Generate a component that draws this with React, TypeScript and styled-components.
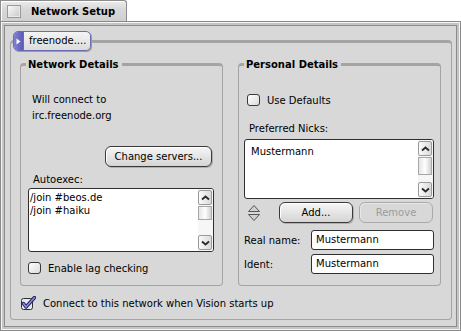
import styled, { createGlobalStyle } from "styled-components"

const GlobalStyle = createGlobalStyle`
  html, body {
    margin: 0;
    padding: 0;
    background: #ffffff;
  }
  body {
    font-family: "DejaVu Sans", "Liberation Sans", sans-serif;
    font-size: 10px;
    color: #000;
  }
`

const Screen = styled.div`
  width: 461px;
  height: 331px;
  display: flex;
  flex-direction: column;
`

const Tab = styled.div`
  box-sizing: border-box;
  width: 127px;
  height: 21px;
  display: flex;
  align-items: center;
  gap: 10px;
  padding-left: 6px;
  border: 1px solid #8c8c8c;
  border-bottom: none;
  border-top-right-radius: 3px;
  background: linear-gradient(#ececec, #d8d8d8 40%, #d0d0d0);
  box-shadow: inset 1px 1px 0 #ffffff;
`

const CloseBox = styled.div`
  box-sizing: border-box;
  width: 14px;
  height: 13px;
  border: 1px solid #9a9a9a;
  background: linear-gradient(135deg, #fafafa, #c8c8c8);
  box-shadow: inset -1px -1px 0 #e8e8e8;
`

const TabTitle = styled.span`
  font-weight: bold;
  font-size: 10px;
`

const Window = styled.div`
  box-sizing: border-box;
  width: 461px;
  height: 310px;
  padding: 18px 8px 6px 9px;
  background: #d8d8d8;
  border: 1px solid #8a8a8a;
  box-shadow: inset 0 0 0 1px #f4f4f4, inset 0 0 0 3px #c4c4c4,
    inset 0 0 0 4px #8c8c8c;
`

const Box = styled.div<{ $w?: number; $h?: number }>`
  position: relative;
  box-sizing: border-box;
  width: ${({ $w }) => ($w ? `${$w}px` : "auto")};
  height: ${({ $h }) => ($h ? `${$h}px` : "auto")};
  border: 1px solid #a4a4a4;
  border-top: 3px solid #a4a4a4;
  border-radius: 4px;
`

const OuterBox = styled(Box)`
  padding: 20px 0 0 9px;
`

const BoxTitle = styled.div`
  position: absolute;
  top: -8px;
  left: 5px;
  padding: 0 3px 0 2px;
  background: #d8d8d8;
  font-weight: bold;
  line-height: 13px;
`

const MenuField = styled.div`
  position: absolute;
  top: -12px;
  left: 2px;
  box-sizing: border-box;
  width: 78px;
  height: 20px;
  display: flex;
  align-items: stretch;
  border: 1px solid #6c6cb0;
  border-radius: 5px;
  overflow: hidden;
  background: linear-gradient(#f4f4f4, #dcdcdc);
  box-shadow: 1px 1px 0 #9a9a9a;
`

const MenuMark = styled.div`
  width: 9px;
  display: flex;
  align-items: center;
  justify-content: center;
  background: linear-gradient(90deg, #8080d8, #5c5cb8);
  border-right: 1px solid #6c6cb0;
`

const MenuLabel = styled.span`
  padding-left: 5px;
  line-height: 18px;
`

const Columns = styled.div`
  display: grid;
  grid-template-columns: 203px 203px;
  column-gap: 15px;
`

const Content = styled.div`
  display: flex;
  flex-direction: column;
  align-items: flex-start;
`

const Text = styled.div<{ $mt?: number; $ml?: number }>`
  margin-top: ${({ $mt }) => $mt ?? 0}px;
  margin-left: ${({ $ml }) => $ml ?? 0}px;
  line-height: 14px;
  white-space: nowrap;
`

const Button = styled.div<{ $w: number; $disabled?: boolean }>`
  box-sizing: border-box;
  width: ${({ $w }) => $w}px;
  height: 21px;
  display: flex;
  align-items: center;
  justify-content: center;
  border: 1px solid ${({ $disabled }) => ($disabled ? "#aaaaaa" : "#3a3a3a")};
  border-radius: 6px;
  color: ${({ $disabled }) => ($disabled ? "#9c9c9c" : "#000")};
  background: ${({ $disabled }) =>
    $disabled ? "#d8d8d8" : "linear-gradient(#f6f6f6, #e2e2e2 60%, #d4d4d4)"};
  box-shadow: ${({ $disabled }) =>
    $disabled ? "inset 1px 1px 0 #e8e8e8" : "inset 1px 1px 0 #ffffff, 1px 1px 0 #b0b0b0"};
`

const ListView = styled.div<{ $mt: number; $ml: number; $w: number; $h: number }>`
  box-sizing: border-box;
  margin-top: ${({ $mt }) => $mt}px;
  margin-left: ${({ $ml }) => $ml}px;
  width: ${({ $w }) => $w}px;
  height: ${({ $h }) => $h}px;
  display: flex;
  border: 1px solid #2e2e2e;
  border-radius: 3px;
  background: #ffffff;
  overflow: hidden;
`

const ListItems = styled.div<{ $pl: number }>`
  flex: 1;
  padding: 2px 0 0 ${({ $pl }) => $pl}px;
  line-height: 13px;
`

const ScrollBar = styled.div`
  width: 14px;
  display: flex;
  flex-direction: column;
  padding: 1px 1px 1px 0;
  background: #f6f6f6;
`

const ScrollArrow = styled.div`
  box-sizing: border-box;
  height: 15px;
  display: flex;
  align-items: center;
  justify-content: center;
  border: 1px solid #9a9a9a;
  border-radius: 2px;
  background: linear-gradient(90deg, #fafafa, #dadada);
`

const Thumb = styled.div<{ $h: number }>`
  box-sizing: border-box;
  height: ${({ $h }) => $h}px;
  margin-top: 1px;
  border: 1px solid #a8a8a8;
  background: linear-gradient(90deg, #e4e4e4, #ffffff 50%, #d2d2d2);
`

const Track = styled.div`
  flex: 1;
`

const CheckRow = styled.div<{ $mt: number; $ml: number }>`
  display: flex;
  align-items: center;
  gap: 7px;
  margin-top: ${({ $mt }) => $mt}px;
  margin-left: ${({ $ml }) => $ml}px;
  white-space: nowrap;
`

const CheckBox = styled.div`
  box-sizing: border-box;
  width: 13px;
  height: 12px;
  border: 1px solid #3a3a3a;
  border-radius: 3px;
  background: linear-gradient(135deg, #ffffff, #dcdcdc);
`

const ButtonRow = styled.div<{ $mt: number }>`
  display: flex;
  align-items: center;
  margin-top: ${({ $mt }) => $mt}px;
  margin-left: 8px;
`

const Spacer = styled.div<{ $w: number }>`
  width: ${({ $w }) => $w}px;
  flex: none;
`

const Field = styled.div`
  box-sizing: border-box;
  width: 123px;
  height: 20px;
  padding-left: 4px;
  line-height: 17px;
  border: 1px solid #2e2e2e;
  border-radius: 3px;
  background: #ffffff;
`

const FieldRow = styled.div<{ $mt: number }>`
  display: flex;
  align-items: center;
  margin-top: ${({ $mt }) => $mt}px;
  margin-left: 5px;
`

const FieldLabel = styled.span`
  width: 67px;
`

const Chevron = ({ down }: { down?: boolean }) => (
  <svg width="9" height="6" viewBox="0 0 9 6">
    <path
      d={down ? "M1 1.5 L4.5 4.5 L8 1.5" : "M1 4.5 L4.5 1.5 L8 4.5"}
      fill="none"
      stroke="#2a2a2a"
      strokeWidth="1.8"
    />
  </svg>
)

const Scroller = ({ thumb }: { thumb: number }) => (
  <ScrollBar>
    <ScrollArrow>
      <Chevron />
    </ScrollArrow>
    <Thumb $h={thumb} />
    <Track />
    <ScrollArrow>
      <Chevron down />
    </ScrollArrow>
  </ScrollBar>
)

const Checked = () => (
  <svg width="15" height="14" viewBox="0 0 15 14">
    <rect x="0.5" y="2.5" width="11" height="11" rx="2" fill="#e8e8f4" stroke="#2e2e2e" />
    <path
      d="M2.5 7.5 L5 11 L13.5 1.5"
      fill="none"
      stroke="#202050"
      strokeWidth="3.4"
      strokeLinejoin="round"
      strokeLinecap="round"
    />
    <path
      d="M2.5 7.5 L5 11 L13.5 1.5"
      fill="none"
      stroke="#8a8ae0"
      strokeWidth="1.6"
      strokeLinejoin="round"
      strokeLinecap="round"
    />
  </svg>
)

const Arrows = () => (
  <svg width="14" height="20" viewBox="0 0 14 20">
    <path d="M1.5 8.5 L7 2.5 L12.5 8.5 Z" fill="#d0d0d0" stroke="#555" />
    <path d="M1.5 11.5 L7 17.5 L12.5 11.5 Z" fill="#d0d0d0" stroke="#555" />
  </svg>
)

export default function App() {
  return (
    <Screen>
      <GlobalStyle />
      <Tab>
        <CloseBox />
        <TabTitle>Network Setup</TabTitle>
      </Tab>
      <Window>
        <OuterBox $w={442} $h={280}>
          <MenuField>
            <MenuMark>
              <svg width="5" height="7" viewBox="0 0 5 7">
                <path d="M0.5 0.5 L4.5 3.5 L0.5 6.5 Z" fill="#ffffff" />
              </svg>
            </MenuMark>
            <MenuLabel>freenode....</MenuLabel>
          </MenuField>
          <Columns>
            <Box $h={223}>
              <BoxTitle>Network Details</BoxTitle>
              <Content>
                <Text $mt={27} $ml={11}>Will connect to</Text>
                <Text $mt={2} $ml={11}>irc.freenode.org</Text>
                <ButtonRow $mt={23}>
                  <Spacer $w={76} />
                  <Button $w={107}>Change servers...</Button>
                </ButtonRow>
                <Text $mt={6} $ml={12}>Autoexec:</Text>
                <ListView $mt={1} $ml={7} $w={186} $h={64}>
                  <ListItems $pl={1}>
                    <div>/join #beos.de</div>
                    <div>/join #haiku</div>
                  </ListItems>
                  <Scroller thumb={14} />
                </ListView>
                <CheckRow $mt={10} $ml={7}>
                  <CheckBox />
                  <span>Enable lag checking</span>
                </CheckRow>
              </Content>
            </Box>
            <Box $h={223}>
              <BoxTitle>Personal Details</BoxTitle>
              <Content>
                <CheckRow $mt={28} $ml={8}>
                  <CheckBox />
                  <span>Use Defaults</span>
                </CheckRow>
                <Text $mt={16} $ml={10}>Preferred Nicks:</Text>
                <ListView $mt={3} $ml={5} $w={190} $h={60}>
                  <ListItems $pl={6}>
                    <div style={{ marginTop: 3 }}>Mustermann</div>
                  </ListItems>
                  <Scroller thumb={18} />
                </ListView>
                <ButtonRow $mt={3}>
                  <Arrows />
                  <Spacer $w={18} />
                  <Button $w={74}>Add...</Button>
                  <Spacer $w={6} />
                  <Button $w={74} $disabled>
                    Remove
                  </Button>
                </ButtonRow>
                <FieldRow $mt={7}>
                  <FieldLabel>Real name:</FieldLabel>
                  <Field>Mustermann</Field>
                </FieldRow>
                <FieldRow $mt={4}>
                  <FieldLabel>Ident:</FieldLabel>
                  <Field>Mustermann</Field>
                </FieldRow>
              </Content>
            </Box>
          </Columns>
          <CheckRow $mt={10} $ml={1}>
            <Checked />
            <span>Connect to this network when Vision starts up</span>
          </CheckRow>
        </OuterBox>
      </Window>
    </Screen>
  )
}
